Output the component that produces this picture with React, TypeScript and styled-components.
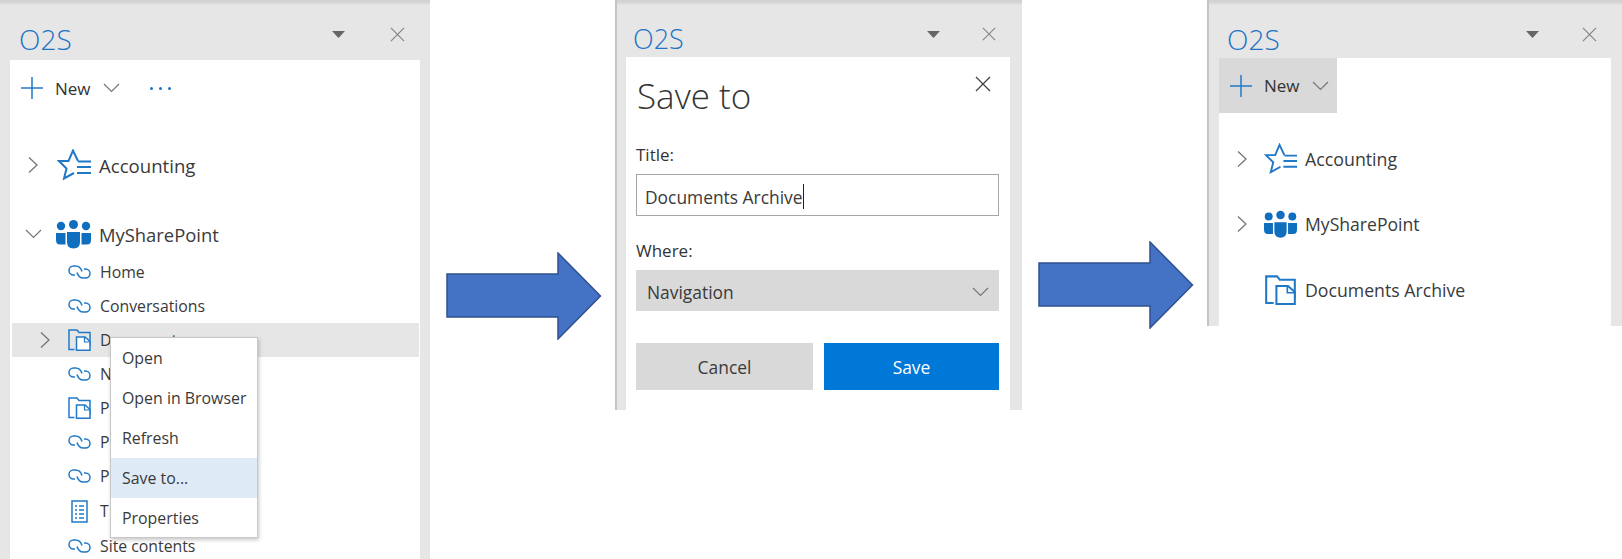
import React from "react";
import styled, { createGlobalStyle } from "styled-components";

const Global = createGlobalStyle`
  html, body { margin: 0; padding: 0; background: #fff; }
  body { font-family: "Open Sans", "Noto Sans", "Liberation Sans", sans-serif; color: #3a3a3a; }
`;

const Page = styled.div`
  display: flex;
  align-items: flex-start;
  width: 1622px;
  height: 559px;
  overflow: hidden;
  background: #fff;
`;

const Panel = styled.section<{ $w: number; $h: number; $l: number; $r: number; $edge?: boolean }>`
  flex: none;
  display: flex;
  flex-direction: column;
  box-sizing: border-box;
  width: ${(p) => p.$w}px;
  height: ${(p) => p.$h}px;
  padding: 0 ${(p) => p.$r}px 0 ${(p) => p.$l}px;
  background: linear-gradient(#cfcfcf 0, #d8d8d8 3px, #e6e6e6 5px);
  border-left: ${(p) => (p.$edge ? "2px solid #c4c4c4" : "none")};
`;

const Header = styled.header<{ $h: number; $pl: number; $pr: number; $gap: number }>`
  flex: none;
  display: flex;
  align-items: flex-start;
  height: ${(p) => p.$h}px;
  padding: 0 ${(p) => p.$pr}px 0 ${(p) => p.$pl}px;
  svg { flex: none; }
  .tri { margin: 31px ${(p) => p.$gap}px 0 auto; }
  .cls { margin-top: 27px; }
`;

const Brand = styled.div<{ $size: number }>`
  font-size: ${(p) => p.$size}px;
  line-height: 30px;
  margin-top: 24px;
  font-weight: 300;
  color: #1f74c4;
`;

const Body = styled.div`
  position: relative;
  flex: 1;
  min-height: 0;
  background: #fff;
`;

const Toolbar = styled.div`
  display: flex;
  align-items: center;
  height: 56px;
  padding-left: 11px;
`;

const NewButton = styled.div`
  display: flex;
  align-items: center;
  box-sizing: border-box;
  width: 118px;
  height: 55px;
  padding-left: 11px;
  background: #d9d9d9;
`;

const NewLabel = styled.span`
  font-size: 17px;
  margin: 0 12px 0 12px;
  color: #333;
`;

const Dots = styled.span`
  display: flex;
  gap: 6px;
  margin-left: 30px;
  i { width: 3px; height: 3px; border-radius: 50%; background: #1f74c4; }
`;

const Tree = styled.div<{ $pt: number }>`
  padding-top: ${(p) => p.$pt}px;
`;

const TopRow = styled.div<{ $mt?: number; $chev: number; $icon: number }>`
  display: flex;
  align-items: center;
  height: 40px;
  margin-top: ${(p) => p.$mt ?? 0}px;
  .chev { flex: none; width: ${(p) => p.$chev}px; display: flex; justify-content: center; }
  .ico { flex: none; width: ${(p) => p.$icon}px; display: flex; justify-content: center; }
`;

const TopLabel = styled.span<{ $size: number }>`
  font-size: ${(p) => p.$size}px;
  margin-left: 8px;
  color: #3a3a3a;
  white-space: nowrap;
`;

const SubRow = styled.div<{ $selected?: boolean; $h: number }>`
  display: flex;
  align-items: center;
  height: ${(p) => p.$h}px;
  margin: 0 1px 0 2px;
  background: ${(p) => (p.$selected ? "#e6e6e6" : "transparent")};
  .chev { flex: none; width: 27px; margin: 0 10px 0 19px; display: flex; justify-content: center; }
  .ph { flex: none; width: 27px; margin: 0 4px 0 25px; }
  .ico { flex: none; width: 23px; display: flex; justify-content: center; margin-right: 9px; }
`;

const SubLabel = styled.span`
  font-size: 15.8px;
  color: #3a3a3a;
  white-space: nowrap;
`;

const Menu = styled.ul`
  position: absolute;
  left: 100px;
  top: 277px;
  width: 148px;
  height: 201px;
  box-sizing: border-box;
  margin: 0;
  padding: 0;
  list-style: none;
  background: #fff;
  border: 1px solid #c8c8c8;
  box-shadow: 1px 2px 4px rgba(0, 0, 0, 0.22);
`;

const MenuItem = styled.li<{ $hot?: boolean }>`
  display: flex;
  align-items: center;
  height: 40px;
  padding-left: 11px;
  font-size: 15.9px;
  color: #3a3a3a;
  background: ${(p) => (p.$hot ? "#deebf7" : "transparent")};
`;

const Arrow = styled.svg<{ $top: number }>`
  flex: none;
  display: block;
  margin-top: ${(p) => p.$top}px;
`;

const ArrowSlot = styled.div<{ $w: number; $pl: number }>`
  flex: none;
  box-sizing: border-box;
  width: ${(p) => p.$w}px;
  padding-left: ${(p) => p.$pl}px;
`;

const Form = styled.div`
  padding: 0 11px 0 10px;
`;

const DialogHead = styled.div`
  display: flex;
  justify-content: space-between;
  align-items: flex-start;
  height: 76px;
  svg { margin: 19px 8px 0 0; flex: none; }
`;

const DialogTitle = styled.h2`
  margin: 14px 0 0 1px;
  font-size: 35px;
  line-height: 50px;
  font-weight: 300;
  color: #333;
`;

const FieldLabel = styled.div<{ $mt?: number }>`
  font-size: 17px;
  line-height: 22px;
  height: 30px;
  margin-top: ${(p) => p.$mt ?? 0}px;
  padding-top: 11px;
  color: #333;
`;

const InputBox = styled.div`
  display: flex;
  align-items: center;
  box-sizing: border-box;
  height: 42px;
  padding: 3px 0 0 8px;
  border: 1px solid #a6a6a6;
  font-size: 17.4px;
  color: #3a3a3a;
`;

const Caret = styled.span`
  display: inline-block;
  width: 1px;
  height: 25px;
  background: #222;
`;

const Select = styled.div`
  display: flex;
  align-items: center;
  justify-content: space-between;
  box-sizing: border-box;
  height: 41px;
  padding: 2px 10px 0 11px;
  background: #d9d9d9;
  font-size: 17.4px;
  color: #3a3a3a;
`;

const Buttons = styled.div`
  display: flex;
  justify-content: space-between;
  margin-top: 32px;
`;

const Btn = styled.div<{ $primary?: boolean; $w: number }>`
  display: flex;
  align-items: center;
  justify-content: center;
  width: ${(p) => p.$w}px;
  height: 47px;
  font-size: 17.4px;
  background: ${(p) => (p.$primary ? "#0078d7" : "#d9d9d9")};
  color: ${(p) => (p.$primary ? "#fff" : "#3a3a3a")};
`;

const BLUE = "#2079c7";
const GREY = "#767676";

const Tri = ({ w = 13, h = 7 }: { w?: number; h?: number }) => (
  <svg className="tri" width={w} height={h} viewBox="0 0 13 7">
    <path d="M0 0H13L6.5 7Z" fill="#666" />
  </svg>
);
const Cross = ({ s, c = "#858585", cls = "cls" }: { s: number; c?: string; cls?: string }) => (
  <svg className={cls} width={s} height={s} viewBox="0 0 16 16">
    <path d="M1 1L15 15M15 1L1 15" stroke={c} strokeWidth="1.3" fill="none" />
  </svg>
);
const Plus = () => (
  <svg width="22" height="22" viewBox="0 0 22 22">
    <path d="M11 0V22M0 11H22" stroke={BLUE} strokeWidth="1.5" />
  </svg>
);
const ChevDown = ({ w = 17, h = 10 }: { w?: number; h?: number }) => (
  <svg width={w} height={h} viewBox="0 0 17 10">
    <path d="M1 1L8.5 8.5L16 1" stroke={GREY} strokeWidth="1.2" fill="none" />
  </svg>
);
const ChevRight = ({ w = 10, h = 16 }: { w?: number; h?: number }) => (
  <svg width={w} height={h} viewBox="0 0 10 16">
    <path d="M1 .5L9 8L1 15.5" stroke={GREY} strokeWidth="1.3" fill="none" />
  </svg>
);
const Star = () => (
  <svg width="34" height="32" viewBox="0 0 34 32">
    <path d="M21 12L16 1.5L11.5 12H2L9.5 19.5L7 29.5L17 24" stroke={BLUE} strokeWidth="2" fill="none" />
    <path d="M21 12.5H34M20 18H34M20 24H34" stroke={BLUE} strokeWidth="2" fill="none" />
  </svg>
);
const Team = () => (
  <svg width="35" height="29" viewBox="0 0 35 29">
    <g fill="#106ebe">
      <circle cx="5" cy="6" r="4.2" />
      <circle cx="17.5" cy="4.5" r="4.5" />
      <circle cx="30" cy="6" r="4.2" />
      <path d="M0 13H9.5V24.5H4Q0 24.5 0 20Z" />
      <path d="M11 12H24V22Q24 28.5 17.5 28.5Q11 28.5 11 22Z" />
      <path d="M25.500 13H35V20Q35 24.5 31 24.5H25.500Z" />
    </g>
  </svg>
);
const Folder = ({ w = 23, h = 22 }: { w?: number; h?: number }) => (
  <svg width={w} height={h} viewBox="0 0 23 22">
    <path d="M6.500 20.500H1V1H9L11 3.500H22V17" stroke={BLUE} strokeWidth="1.500" fill="none" />
    <path d="M8.500 21.200V8H17L22 12.500V21.200Z" stroke={BLUE} strokeWidth="1.500" fill="#fff" />
    <path d="M16.500 8V13H22" stroke={BLUE} strokeWidth="1.200" fill="none" />
  </svg>
);
const LinkIco = () => (
  <svg width="23" height="14" viewBox="0 0 23 14">
    <g stroke={BLUE} strokeWidth="1.500" fill="none">
      <path d="M14 6.500C13 3 10.500 1 7.500 1H5.500a4.500 4.500 0 0 0 0 9H7" />
      <path d="M9 7.500C10 11 12.500 13 15.500 13H17.500a4.500 4.500 0 0 0 0-9H16" />
    </g>
  </svg>
);
const ListIco = () => (
  <svg width="17" height="23" viewBox="0 0 17 23">
    <rect x="1" y="1" width="15" height="21" stroke={BLUE} strokeWidth="1.500" fill="none" />
    <path d="M4 6H6M8 6H13M4 10H6M8 10H13M4 14H6M8 14H13M4 18H6M8 18H13" stroke={BLUE} strokeWidth="1.300" />
  </svg>
);
const BigArrow = ({ top }: { top: number }) => (
  <Arrow $top={top} width="156" height="88" viewBox="0 0 156 88">
    <path d="M1 22H112V1L154.500 44L112 87V65H1Z" fill="#4472c4" stroke="#2f528f" strokeWidth="1.500" />
  </Arrow>
);

const subs: [string, React.ReactNode, number][] = [
  ["Home", <LinkIco />, 35],
  ["Conversations", <LinkIco />, 34],
];
const subsAfter: [string, React.ReactNode, number][] = [
  ["N", <LinkIco />, 34],
  ["P", <Folder />, 34],
  ["P", <LinkIco />, 34],
  ["P", <LinkIco />, 34],
  ["T", <ListIco />, 36],
  ["Site contents", <LinkIco />, 33],
];

export default function App() {
  return (
    <Page>
      <Global />
      <Panel $w={430} $h={559} $l={10} $r={10}>
        <Header $h={60} $pl={9} $pr={15} $gap={45}>
          <Brand $size={28}>O2S</Brand>
          <Tri />
          <Cross s={15} />
        </Header>
        <Body>
          <Toolbar>
            <Plus />
            <NewLabel>New</NewLabel>
            <ChevDown />
            <Dots><i /><i /><i /></Dots>
          </Toolbar>
          <Tree $pt={29}>
            <TopRow $chev={46} $icon={35}>
              <span className="chev"><ChevRight /></span>
              <span className="ico"><Star /></span>
              <TopLabel $size={18.6}>Accounting</TopLabel>
            </TopRow>
            <TopRow $mt={29} $chev={46} $icon={35}>
              <span className="chev"><ChevDown /></span>
              <span className="ico"><Team /></span>
              <TopLabel $size={18.4}>MySharePoint</TopLabel>
            </TopRow>
            {subs.map(([t, ic, h], i) => (
              <SubRow key={i} $h={h}>
                <span className="ph" />
                <span className="ico">{ic}</span>
                <SubLabel>{t}</SubLabel>
              </SubRow>
            ))}
            <SubRow $selected $h={34}>
              <span className="chev"><ChevRight /></span>
              <span className="ico"><Folder /></span>
              <SubLabel>Documents</SubLabel>
            </SubRow>
            {subsAfter.map(([t, ic, h], i) => (
              <SubRow key={i} $h={h}>
                <span className="ph" />
                <span className="ico">{ic}</span>
                <SubLabel>{t}</SubLabel>
              </SubRow>
            ))}
          </Tree>
          <Menu>
            <MenuItem>Open</MenuItem>
            <MenuItem>Open in Browser</MenuItem>
            <MenuItem>Refresh</MenuItem>
            <MenuItem $hot>Save to...</MenuItem>
            <MenuItem>Properties</MenuItem>
          </Menu>
        </Body>
      </Panel>

      <ArrowSlot $w={185} $pl={16}>
        <BigArrow top={252} />
      </ArrowSlot>

      <Panel $w={407} $h={410} $l={9} $r={12} $edge>
        <Header $h={57} $pl={7} $pr={14} $gap={42}>
          <Brand $size={27}>O2S</Brand>
          <Tri />
          <Cross s={14} />
        </Header>
        <Body>
          <Form>
            <DialogHead>
              <DialogTitle>Save to</DialogTitle>
              <Cross s={16} c="#444" cls="" />
            </DialogHead>
            <FieldLabel>Title:</FieldLabel>
            <InputBox>Documents Archive<Caret /></InputBox>
            <FieldLabel $mt={13}>Where:</FieldLabel>
            <Select>
              Navigation
              <ChevDown />
            </Select>
            <Buttons>
              <Btn $w={177}>Cancel</Btn>
              <Btn $primary $w={175}>Save</Btn>
            </Buttons>
          </Form>
        </Body>
      </Panel>

      <ArrowSlot $w={185} $pl={16}>
        <BigArrow top={241} />
      </ArrowSlot>

      <Panel $w={415} $h={326} $l={10} $r={11} $edge>
        <Header $h={58} $pl={8} $pr={14} $gap={43}>
          <Brand $size={28}>O2S</Brand>
          <Tri />
          <Cross s={15} />
        </Header>
        <Body>
          <NewButton>
            <Plus />
            <NewLabel>New</NewLabel>
            <ChevDown />
          </NewButton>
          <Tree $pt={26}>
            <TopRow $chev={45} $icon={33}>
              <span className="chev"><ChevRight /></span>
              <span className="ico"><Star /></span>
              <TopLabel $size={17.8}>Accounting</TopLabel>
            </TopRow>
            <TopRow $mt={25} $chev={45} $icon={33}>
              <span className="chev"><ChevRight /></span>
              <span className="ico"><Team /></span>
              <TopLabel $size={17.6}>MySharePoint</TopLabel>
            </TopRow>
            <TopRow $mt={26} $chev={45} $icon={33}>
              <span className="chev" />
              <span className="ico"><Folder w={33} h={30} /></span>
              <TopLabel $size={17.7}>Documents Archive</TopLabel>
            </TopRow>
          </Tree>
        </Body>
      </Panel>
    </Page>
  );
}
